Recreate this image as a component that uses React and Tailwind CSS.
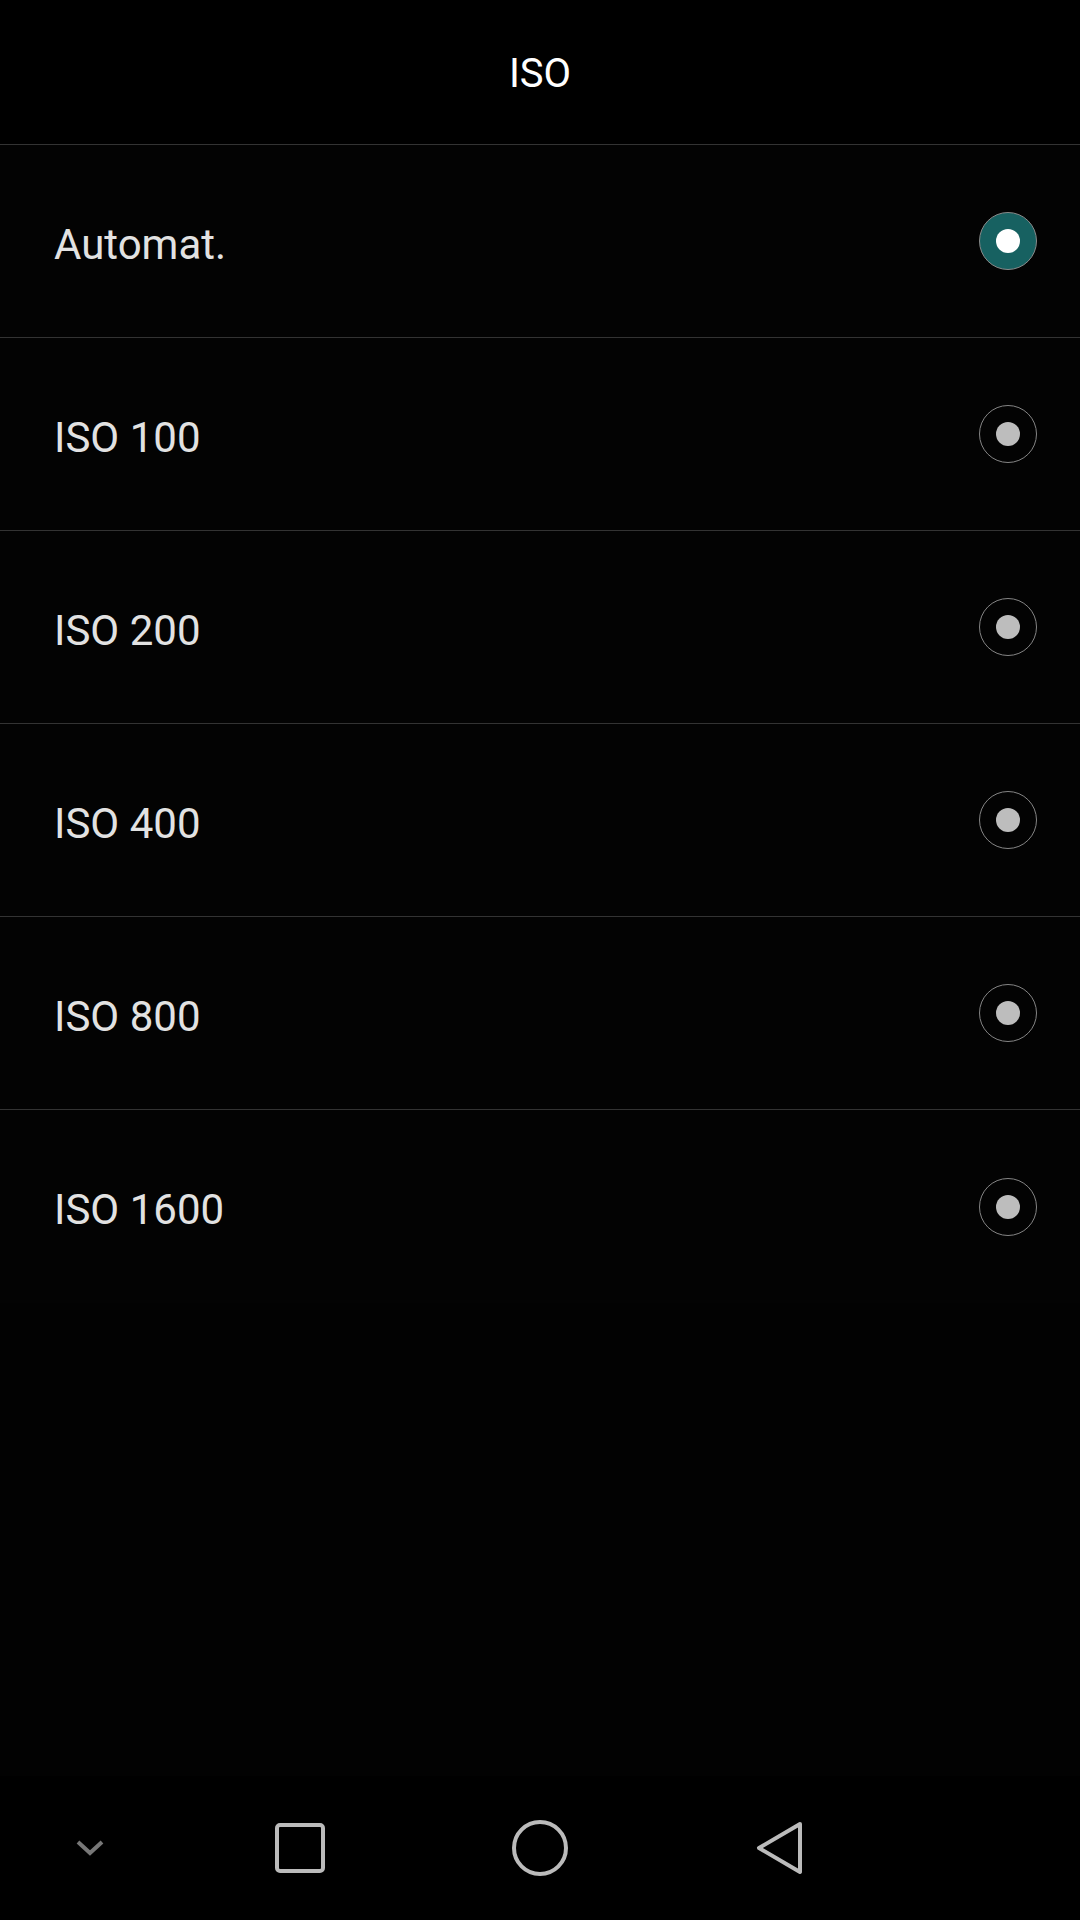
const options = [
  { label: "Automat.", value: "auto" },
  { label: "ISO 100", value: "100" },
  { label: "ISO 200", value: "200" },
  { label: "ISO 400", value: "400" },
  { label: "ISO 800", value: "800" },
  { label: "ISO 1600", value: "1600" },
];

function Radio({ checked }) {
  if (checked) {
    return (
      <div className="flex h-[58px] w-[58px] items-center justify-center rounded-full border-[1.5px] border-[#8a8a8a] bg-[#176161]">
        <div className="h-[24px] w-[24px] rounded-full bg-white" />
      </div>
    );
  }

  return (
    <div className="flex h-[58px] w-[58px] items-center justify-center rounded-full border-[1.5px] border-[#858585]">
      <div className="h-[24px] w-[24px] rounded-full bg-[#bdbdbd]" />
    </div>
  );
}

function NavBar() {
  return (
    <div className="flex h-[144px] items-center">
      <div className="flex w-[180px] justify-center">
        <svg width="30" height="20" viewBox="0 0 30 20">
          <polyline
            points="3,4 15,15 27,4"
            fill="none"
            stroke="#777777"
            strokeWidth="4"
          />
        </svg>
      </div>
      <div className="flex w-[240px] justify-center">
        <svg width="50" height="50" viewBox="0 0 50 50">
          <rect x="2" y="2" width="46" height="46" rx="3" fill="none" stroke="#bbbbbb" strokeWidth="4" />
        </svg>
      </div>
      <div className="flex w-[240px] justify-center">
        <svg width="56" height="56" viewBox="0 0 56 56">
          <circle cx="28" cy="28" r="26" fill="none" stroke="#bbbbbb" strokeWidth="4" />
        </svg>
      </div>
      <div className="flex w-[240px] justify-center">
        <svg width="50" height="54" viewBox="0 0 50 54">
          <polygon
            points="45,3 4,27 45,51"
            fill="none"
            stroke="#bbbbbb"
            strokeWidth="4"
            strokeLinejoin="round"
          />
        </svg>
      </div>
    </div>
  );
}

export default function App() {
  const selected = "auto";

  return (
    <div
      className="flex h-[1920px] w-[1080px] flex-col bg-black"
      style={{ fontFamily: "Roboto, 'Noto Sans', sans-serif" }}
    >
      <div className="flex h-[145px] items-center justify-center border-b border-[#333333] pt-[4px]">
        <span className="text-[40px] leading-none text-white">ISO</span>
      </div>

      <div className="bg-[#030303]">
        {options.map((option, index) => (
          <div
            key={option.value}
            className={`flex h-[193px] items-center justify-between pl-[54px] pr-[43px] ${
              index < options.length - 1 ? "border-b border-[#333333]" : ""
            }`}
          >
            <span className="pt-[7px] text-[42px] leading-none text-[#e2e2e2]">{option.label}</span>
            <Radio checked={option.value === selected} />
          </div>
        ))}
      </div>

      <div className="flex-1 bg-[#020202]" />

      <NavBar />
    </div>
  );
}
